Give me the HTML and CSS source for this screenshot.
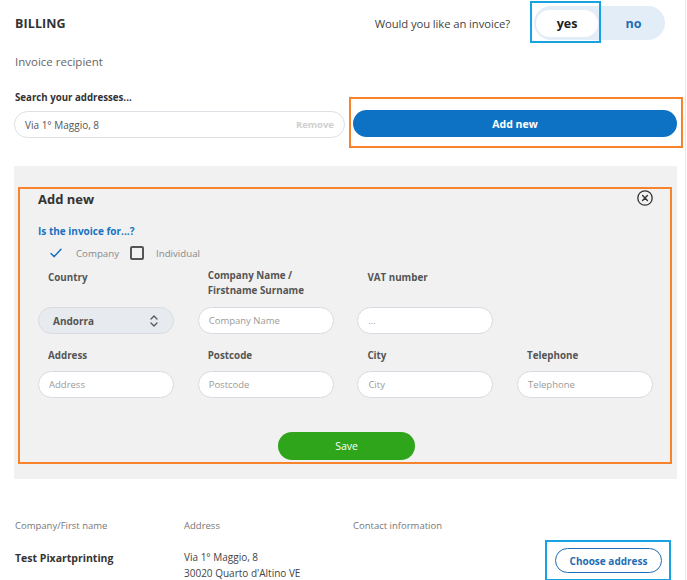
FILE: index.html
```html
<!DOCTYPE html>
<html lang="en">
<head>
<meta charset="utf-8">
<title>Billing</title>
<link rel="stylesheet" href="styles.css">
</head>
<body>
<div class="page">
  <header class="head">
    <h1 class="title">BILLING</h1>
    <div class="invoice-q">
      <span class="q-text">Would you like an invoice?</span>
      <div class="toggle">
        <span class="opt opt-on">yes</span>
        <span class="opt opt-off">no</span>
        <span class="mark-cyan"></span>
      </div>
    </div>
  </header>

  <p class="recipient">Invoice recipient</p>

  <div class="search-row">
    <div class="search-col">
      <div class="search-label">Search your addresses...</div>
      <div class="search-input">
        <span class="search-value">Via 1° Maggio, 8</span>
        <span class="remove">Remove</span>
      </div>
    </div>
    <div class="mark-orange add-wrap">
      <button class="btn-blue">Add new</button>
    </div>
  </div>

  <section class="panel">
    <div class="mark-orange form-box">
      <div class="form-head">
        <h2 class="form-title">Add new</h2>
        <svg class="close" width="16" height="16" viewBox="0 0 16 16">
          <circle cx="8" cy="8" r="7.2" fill="none" stroke="#333" stroke-width="1.3"/>
          <path d="M5.6 5.6 L10.4 10.4 M10.4 5.6 L5.6 10.4" stroke="#333" stroke-width="1.4" stroke-linecap="round"/>
        </svg>
      </div>
      <div class="for-q">Is the invoice for...?</div>
      <div class="choice-row">
        <svg class="check" width="12" height="10" viewBox="0 0 12 10">
          <path d="M1 5.5 L4.2 8.6 L11 1.2" fill="none" stroke="#1a73c0" stroke-width="1.5" stroke-linecap="round" stroke-linejoin="round"/>
        </svg>
        <span class="choice">Company</span>
        <span class="box"></span>
        <span class="choice">Individual</span>
      </div>

      <div class="grid">
        <label class="lbl lbl-tall lbl-one">Country</label>
        <label class="lbl lbl-tall">Company Name /<br>Firstname Surname</label>
        <label class="lbl lbl-tall lbl-one">VAT number</label>
        <span></span>

        <div class="select">
          <span>Andorra</span>
          <svg width="10" height="14" viewBox="0 0 10 14">
            <path d="M2 5 L5 2 L8 5 M2 9 L5 12 L8 9" fill="none" stroke="#555" stroke-width="1.3" stroke-linecap="round" stroke-linejoin="round"/>
          </svg>
        </div>
        <input class="field" placeholder="Company Name">
        <input class="field" placeholder="...">
        <span></span>

        <label class="lbl lbl-row2">Address</label>
        <label class="lbl lbl-row2">Postcode</label>
        <label class="lbl lbl-row2">City</label>
        <label class="lbl lbl-row2">Telephone</label>

        <input class="field" placeholder="Address">
        <input class="field" placeholder="Postcode">
        <input class="field" placeholder="City">
        <input class="field" placeholder="Telephone">
      </div>

      <div class="save-row">
        <button class="btn-green">Save</button>
      </div>
    </div>
  </section>

  <section class="addresses">
    <div class="col-h">Company/First name</div>
    <div class="col-h">Address</div>
    <div class="col-h">Contact information</div>
    <div></div>

    <div class="name">Test Pixartprinting</div>
    <div class="addr">Via 1° Maggio, 8<br>30020 Quarto d'Altino VE</div>
    <div></div>
    <div class="mark-cyan-box">
      <button class="btn-outline">Choose address</button>
    </div>
  </section>
</div>
</body>
</html>
```

FILE: styles.css
```css
* { box-sizing: border-box; }
html, body { margin: 0; padding: 0; background: #fff; }
body {
  font-family: "Open Sans", "Liberation Sans", sans-serif;
  color: #333;
  width: 687px;
  height: 580px;
  overflow: hidden;
}
.page {
  width: 686px;
  min-height: 580px;
  border-right: 1px solid #e6e6e6;
  padding: 0 4px 0 14px;
}

/* header */
.head {
  height: 46px;
  display: flex;
  align-items: center;
  justify-content: space-between;
  padding: 0 16px 0 1px;
}
.title {
  margin: 0;
  font-size: 12.5px;
  font-weight: 700;
  color: #333;
  letter-spacing: 0.1px;
}
.invoice-q { display: flex; align-items: center; gap: 24px; }
.q-text { font-size: 11.3px; color: #444; letter-spacing: -0.1px; }
.toggle {
  position: relative;
  display: flex;
  align-items: center;
  width: 131px;
  height: 34px;
  padding: 0 2px;
  border-radius: 17px;
  background: #e2edf8;
}
.opt {
  font-size: 12.5px;
  font-weight: 700;
  text-align: center;
}
.opt-on {
  width: 62px;
  height: 27px;
  line-height: 27px;
  margin-top: 1px;
  border-radius: 14px;
  background: #fff;
  color: #222;
}
.opt-off { flex: 1; color: #1f6db3; padding-left: 6px; }
.mark-cyan {
  position: absolute;
  left: -4px;
  top: -5px;
  width: 71px;
  height: 42px;
  border: 2px solid #17a2e2;
}

.recipient {
  margin: 8px 0 0 1px;
  font-size: 11.5px;
  line-height: 16px;
  color: #666;
}

/* search row */
.search-row {
  display: grid;
  grid-template-columns: 331px 334px;
  column-gap: 4px;
  margin-top: 21px;
  align-items: start;
}
.search-label {
  font-size: 9.7px;
  font-weight: 700;
  line-height: 14px;
  color: #333;
  padding-left: 1px;
}
.search-input {
  margin-top: 6px;
  height: 27px;
  border: 1px solid #dcdfe3;
  border-radius: 14px;
  display: flex;
  align-items: center;
  justify-content: space-between;
  padding: 0 10px 0 10px;
}
.search-value { font-size: 10px; color: #555; }
.remove { font-size: 9.5px; font-weight: 700; color: #cfcfcf; }

.mark-orange { border: 2px solid #f7832d; }
.add-wrap {
  margin-top: 6px;
  padding: 11px 4px 9px 2px;
}
.btn-blue {
  display: block;
  width: 100%;
  height: 27px;
  border: 0;
  border-radius: 14px;
  background: #0e72c4;
  color: #fff;
  font-family: inherit;
  font-size: 10.5px;
  font-weight: 700;
}

/* panel */
.panel {
  margin-top: 18px;
  width: 663px;
  background: #f1f1f1;
  padding: 21px 5px 15px 4px;
}
.form-box {
  padding: 1px 16px 2px 18px;
}
.form-head {
  height: 16px;
  display: flex;
  align-items: center;
  justify-content: space-between;
}
.form-title {
  margin: 2px 0 0;
  font-size: 13px;
  font-weight: 700;
  color: #333;
}
.close { margin-right: 1px; display: block; }
.for-q {
  margin-top: 18px;
  font-size: 10px;
  line-height: 14px;
  font-weight: 700;
  color: #1a73c0;
}
.choice-row {
  margin-top: 8px;
  height: 14px;
  display: flex;
  align-items: center;
  padding-left: 12px;
}
.check { margin-right: 14px; }
.choice { font-size: 9.7px; color: #8a8a8a; }
.box {
  width: 14px;
  height: 14px;
  border: 2px solid #555;
  border-radius: 2px;
  margin: 0 12px 0 11px;
}

.grid {
  margin-top: 9px;
  display: grid;
  grid-template-columns: repeat(4, 136px);
  column-gap: 23.7px;
}
.lbl {
  display: block;
  padding-left: 10px;
  font-size: 9.8px;
  font-weight: 700;
  line-height: 14.5px;
  color: #555;
}
.lbl-tall { min-height: 30px; margin-bottom: 8px; }
.lbl-one { padding-top: 1.5px; }
.lbl-row2 { margin-top: 15px; margin-bottom: 8px; line-height: 14px; }
.select {
  height: 27px;
  border: 1px solid #d8dce1;
  border-radius: 14px;
  background: #e7eaee;
  display: flex;
  align-items: center;
  justify-content: space-between;
  padding: 0 14px 0 14px;
  font-size: 10px;
  font-weight: 700;
  color: #555;
}
.select svg { display: block; }
.field {
  height: 27px;
  width: 136px;
  border: 1px solid #d6dbe1;
  border-radius: 14px;
  background: #fff;
  padding: 0 10px;
  font-family: "Open Sans", "Liberation Sans", sans-serif;
  font-size: 9.5px;
  color: #555;
  outline: none;
}
.field::placeholder { color: #9a9a9a; }

.save-row {
  margin-top: 34px;
  display: flex;
  justify-content: center;
}
.btn-green {
  width: 137px;
  height: 28px;
  border: 0;
  border-radius: 14px;
  background: #2ea51a;
  color: #fff;
  font-family: inherit;
  font-size: 10.5px;
  margin-left: 1px;
}

/* address list */
.addresses {
  margin-top: 40px;
  display: grid;
  grid-template-columns: 169px 169px 193px 125px;
  row-gap: 7px;
  padding-left: 1px;
}
.col-h {
  font-size: 9.5px;
  line-height: 14px;
  color: #777;
}
.name {
  padding-top: 10px;
  font-size: 10.5px;
  line-height: 16px;
  font-weight: 700;
  color: #333;
}
.addr {
  padding-top: 9px;
  font-size: 10px;
  line-height: 16px;
  color: #444;
}
.mark-cyan-box {
  border: 2px solid #17a2e2;
  padding: 6px 6px 4px 8px;
  margin-left: -1px;
}
.btn-outline {
  display: block;
  width: 107px;
  height: 25px;
  border: 1px solid #1f6db3;
  border-radius: 13px;
  background: #fff;
  color: #1f6db3;
  font-family: inherit;
  font-size: 10px;
  font-weight: 700;
  padding: 0;
}
```
